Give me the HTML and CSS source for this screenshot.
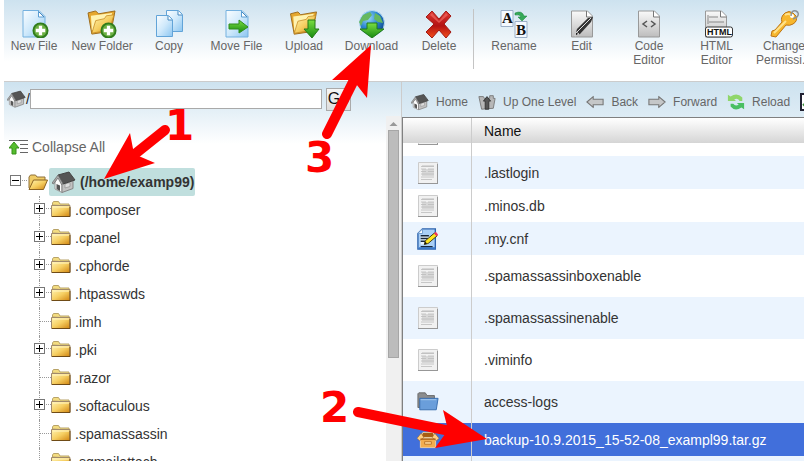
FILE: index.html
```html
<!DOCTYPE html>
<html lang="en">
<head>
<meta charset="utf-8">
<title>File Manager</title>
<link rel="stylesheet" href="styles.css">
</head>
<body>
<svg class="defs" aria-hidden="true">
  <defs>
    <linearGradient id="blueG" x1="0" y1="0" x2="1" y2="1"><stop offset="0" stop-color="#fafdff"/><stop offset=".5" stop-color="#cfe9fb"/><stop offset="1" stop-color="#8cc6f1"/></linearGradient>
    <linearGradient id="grayG" x1="0" y1="0" x2="0" y2="1"><stop offset="0" stop-color="#fafafa"/><stop offset="1" stop-color="#bdbdbd"/></linearGradient>
    <linearGradient id="goldG" x1="0" y1="0" x2="1" y2="1"><stop offset="0" stop-color="#fff3b0"/><stop offset=".5" stop-color="#f6cf62"/><stop offset="1" stop-color="#d08410"/></linearGradient>
    <linearGradient id="greenG" x1="0" y1="0" x2="0" y2="1"><stop offset="0" stop-color="#7ade42"/><stop offset="1" stop-color="#168a10"/></linearGradient>
    <linearGradient id="redG" x1="0" y1="0" x2="0" y2="1"><stop offset="0" stop-color="#e03a34"/><stop offset=".55" stop-color="#b31212"/><stop offset="1" stop-color="#f4511c"/></linearGradient>
    <radialGradient id="globeG" cx=".35" cy=".3" r=".8"><stop offset="0" stop-color="#9bd8f8"/><stop offset=".5" stop-color="#2b86cf"/><stop offset="1" stop-color="#0b3f84"/></radialGradient>

    <symbol id="page-blue" viewBox="0 0 28 28"><path d="M3 .5h16l6 6v20.500H3z" fill="url(#blueG)" stroke="#75b1df"/><path d="M18.500 1v6h6" fill="#fff" stroke="#5c9fd3"/><path d="M19 2l5 5" stroke="#4588bf"/></symbol>
    <symbol id="plus" viewBox="0 0 18 18"><circle cx="9" cy="9" r="7.500" fill="#6cb043" stroke="#317d1c" stroke-width="2"/><path d="M9 4v10M4 9h10" stroke="#fff" stroke-width="3.500"/></symbol>
    <symbol id="folder-open" viewBox="0 0 32 28"><path d="M2 3l8-2 3 3 17-3-4 21-20 3z" fill="#e5a72e" stroke="#9b6a1b"/><path d="M5 6l22-3-3 14-18 4z" fill="#fff3b0"/><path d="M6 24l4-13 9-2 2-3 8-1-5 16z" fill="url(#goldG)" stroke="#c48a23" stroke-width=".8"/></symbol>
    <symbol id="page-gray" viewBox="0 0 28 28"><path d="M3.500 1h16l5 5v21h-21z" fill="url(#grayG)" stroke="#999"/><path d="M18.500 1v6h6" fill="#fff" stroke="#777"/></symbol>
    <symbol id="home" viewBox="0 0 24 22"><path d="M3 11v7l7 3.500V10L6 5z" fill="#fcfcfc" stroke="#999"/><path d="M10 10v11.500l11-4v-8z" fill="#c2c2c2" stroke="#858585"/><path d="M4.500 13l3.500 1.500V20l-3.500-2z" fill="#555"/><path d="M13 13l5-1.500v4L13 17z" fill="#ddd" stroke="#888" stroke-width=".6"/><path d="M6 4l11-3 6 8-12 4z" fill="#555" stroke="#444"/><path d="M0 12l6-8 5 8.500-1.500 1L6 7l-4.500 6z" fill="#aaa" stroke="#666" stroke-width=".7"/></symbol>
    <symbol id="folder" viewBox="0 0 20 17"><path d="M1.500 4V2l1-1.500h5L9 3h9v2z" fill="#f3dc81" stroke="#b8a368"/><path d="M.5 4.500h18.500v11H.5z" fill="url(#goldG)" stroke="#a18a6c"/><path d="M1 15.500h18V6" fill="none" stroke="#6f4b16"/><path d="M2 6h16" stroke="#fff6c4"/></symbol>
    <symbol id="folder-root" viewBox="0 0 20 17"><path d="M1 14V3l1.500-2h5L9 3h8v4" fill="#f0cc66" stroke="#8f713a"/><path d="M1 15.500L5.500 6H19.500l-4 9.500z" fill="url(#goldG)" stroke="#8c6423"/></symbol>
    <symbol id="doc" viewBox="0 0 22 24"><path d="M1.500 1.500h19v21h-19z" fill="#f1f1f1" stroke="#ccc"/><path d="M1 22.500h20M20.500 3v19" stroke="#979797"/><path d="M5 4h12v2H5zm0 4h12v7H5z" fill="#d8d8d8"/><path d="M4 5.500h13M4 8h5m2 0h6M4 10.500h5m2 0h6M4 13h13M4 16h13M4 18.500h11" stroke="#bcbcbc" stroke-width=".8"/></symbol>
    <symbol id="doc-edit" viewBox="0 0 24 24"><path d="M6 1h14v22H1V6z" fill="#a9cff6" stroke="#2c62ad" stroke-width="1.500"/><path d="M6 1v5H1z" fill="#fff" stroke="#6d9bd0"/><path d="M4 8h9l-1 10H4z" fill="#e9f4ff"/><path d="M4 8.500h9M4 11.500h8M4 14.500h6M4 20.500h13" stroke="#17263b" stroke-width="1.500"/><path d="M2 22h18" stroke="#3977c7" stroke-width="2"/><path d="M8 18l1-4 10-8.500 3 3L12 17z" fill="#ffe51c" stroke="#342f0c"/><path d="M8 18l1-3 2 2z" fill="#111"/><path d="M18.500 6l2-2 2.500 3-1.500 2z" fill="#f0385b"/></symbol>
    <symbol id="folder-blue" viewBox="0 0 24 22"><path d="M1 17V2l1-1h7l2 3h8v12z" fill="#8b8d8f" stroke="#666"/><path d="M3 7h20l-2 12.500H3z" fill="#6a9edb" stroke="#356aac"/><path d="M4 8.500h17" stroke="#a9caec"/></symbol>
    <symbol id="box" viewBox="0 0 26 22"><path d="M7 2h12l2 6H4z" fill="#a65d12" stroke="#fce0ae"/><path d="M4 9h18v11H4z" fill="#f2ad4d" stroke="#fbd9a0"/><path d="M5 3L0 9l3 3 5-4zm16 0l5 6-3 3-5-4z" fill="#ffcf82" stroke="#9b6426" stroke-width=".7"/><path d="M4 10h18" stroke="#a35a14" stroke-width="1.500"/><path d="M9 13h8v3H9z" fill="#ffd895" stroke="#b46e22"/></symbol>
    <symbol id="arrow-left" viewBox="0 0 20 14"><path d="M1 7l7-6v3h11v6H8v3z" fill="#c5c7c8" stroke="#777" stroke-width="1.200"/></symbol>
  </defs>
</svg>

<div class="app">
  <header class="toolbar">
    <div class="group group-main">
      <button type="button"><svg class="ico" viewBox="0 0 32 28"><use href="#page-blue" x="2" width="28" height="28"/><use href="#plus" x="14" y="12" width="17" height="17"/></svg>New File</button>
      <button type="button"><svg class="ico" viewBox="0 0 32 28"><use href="#folder-open" width="31" height="27"/><use href="#plus" x="14" y="12" width="17" height="17"/></svg>New Folder</button>
      <button type="button"><svg class="ico" viewBox="0 0 32 28"><path d="M13.500.5h12l4 4v17h-16z" fill="url(#blueG)" stroke="#62a4d8"/><path d="M25 1v4h4" fill="#fff" stroke="#4588bf"/><path d="M3.500 5.500h12l4 4v17h-16z" fill="url(#blueG)" stroke="#62a4d8"/><path d="M15 6v4h4" fill="#fff" stroke="#4588bf"/></svg>Copy</button>
      <button type="button"><svg class="ico" viewBox="0 0 32 28"><use href="#page-blue" x="2" width="28" height="28"/><path d="M8 14h10v-4l9 7-9 6v-4H8z" fill="url(#greenG)" stroke="#2f8c1c"/></svg>Move File</button>
      <button type="button"><svg class="ico" viewBox="0 0 32 28"><use href="#folder-open" y="1" width="31" height="26"/><path d="M20 10h7v9h4l-7 9-8-9h4z" fill="url(#greenG)" stroke="#277a19"/></svg>Upload</button>
      <button type="button"><svg class="ico" viewBox="0 0 32 28"><circle cx="16" cy="13" r="12.500" fill="url(#globeG)" stroke="#bbdef5"/><path d="M7 5l7-3 2 3-4 5-5 1-2 5-2-4zM19 3l5 3 3 7-5-1-4-3z" fill="#66b85f"/><path d="M11 13h10v6h7l-12 9-12-9h7z" fill="url(#greenG)" stroke="#217a18"/></svg>Download</button>
      <button type="button"><svg class="ico" viewBox="0 0 32 28"><path d="M9 1l7 8 7-8 5 5-7 8 7 8-5 6-7-8-7 8-6-6 8-8-8-7z" fill="url(#redG)" stroke="#a31a14"/><path d="M9 3l7 8 7-8 2 2-9 8-9-8z" fill="#ef6b64" opacity=".65"/></svg>Delete</button>
    </div>
    <div class="separator"></div>
    <div class="group group-edit">
      <button type="button"><svg class="ico letter" viewBox="0 0 32 28"><path d="M3 .5h12v16H3zM17 11.500h12v16H17z" fill="#f4f9ff" stroke="#9bafc8"/><text x="4" y="13">A</text><text x="18" y="25">B</text><path d="M17 3q7-3 9 3h3l-5 5-4-4h3q-1-3-6-2z" fill="#35a958" stroke="#1a803b" stroke-width=".5"/></svg>Rename</button>
      <button type="button"><svg class="ico" viewBox="0 0 32 28"><use href="#page-gray" x="2" width="28" height="28"/><path d="M9 26l2-7L22 8l5-1-2 5-11 12z" fill="#333"/><path d="M11 22L25 8M9 26l1-4 3 2z" stroke="#ddd"/></svg>Edit</button>
      <button type="button"><svg class="ico" viewBox="0 0 32 28"><use href="#page-gray" x="2" width="28" height="28"/><path d="M14 11l-4 3 4 3m4-6l4 3-4 3" fill="none" stroke="#555" stroke-width="1.500"/></svg>Code<br>Editor</button>
      <button type="button"><svg class="ico html" viewBox="0 0 32 28"><use href="#page-gray" x="1" width="28" height="28"/><path d="M8 7h9M8 12h15M7 5v9" stroke="#888"/><rect x="4.500" y="17" width="27" height="10" rx="2" fill="#fff" stroke="#333"/><text x="6" y="25">HTML</text></svg>HTML<br>Editor</button>
      <button type="button"><svg class="ico" viewBox="0 0 32 28"><path d="M17 3q4-3 8 0l3 3q2 5-3 8-3 2-7 1L8 27l-5-1 1-5 3-1 7-8q-2-5 3-9z" fill="#f7b72d" stroke="#bd7414"/><path d="M17 5q3-2 6 0M6 23L18 11" stroke="#ffe28b" stroke-width="2" fill="none"/><circle cx="24" cy="6" r="2" fill="#fff"/><path d="M23 6q0-6 5-5 4 2 1 6l-4 2" fill="none" stroke="#8b9298" stroke-width="1.500"/></svg>Change<br>Permissi...</button>
    </div>
  </header>

  <div class="split">
    <aside class="sidebar">
      <form class="address">
        <label for="path"><svg class="home-s" viewBox="0 0 24 22"><use href="#home"/></svg>/</label>
        <input id="path" type="text">
        <button type="button">Go</button>
      </form>
      <div class="tree-area">
        <nav class="tree">
          <button type="button" class="collapse"><svg class="collapse-ico" viewBox="0 0 20 16"><path d="M0 1.500h19M11 5.500h8M11 9.500h8M11 13.500h8" stroke="#666" stroke-width="1.200"/><path d="M5 3l5 6H7v6H3V9H0z" fill="#55bd2d" stroke="#368f1b"/></svg>Collapse All</button>
          <div class="root"><button type="button" class="toggle minus" aria-label="Collapse"></button><svg class="folder" viewBox="0 0 20 17"><use href="#folder-root"/></svg><a href="#"><svg class="home-m" viewBox="0 0 24 22"><use href="#home"/></svg>(/home/examp99)</a></div>
          <ul>
            <li><button type="button" class="toggle" aria-label="Expand"></button><svg class="folder" viewBox="0 0 20 17"><use href="#folder"/></svg><a href="#">.composer</a></li>
            <li><button type="button" class="toggle" aria-label="Expand"></button><svg class="folder" viewBox="0 0 20 17"><use href="#folder"/></svg><a href="#">.cpanel</a></li>
            <li><button type="button" class="toggle" aria-label="Expand"></button><svg class="folder" viewBox="0 0 20 17"><use href="#folder"/></svg><a href="#">.cphorde</a></li>
            <li><button type="button" class="toggle" aria-label="Expand"></button><svg class="folder" viewBox="0 0 20 17"><use href="#folder"/></svg><a href="#">.htpasswds</a></li>
            <li class="leaf"><svg class="folder" viewBox="0 0 20 17"><use href="#folder"/></svg><a href="#">.imh</a></li>
            <li><button type="button" class="toggle" aria-label="Expand"></button><svg class="folder" viewBox="0 0 20 17"><use href="#folder"/></svg><a href="#">.pki</a></li>
            <li class="leaf"><svg class="folder" viewBox="0 0 20 17"><use href="#folder"/></svg><a href="#">.razor</a></li>
            <li><button type="button" class="toggle" aria-label="Expand"></button><svg class="folder" viewBox="0 0 20 17"><use href="#folder"/></svg><a href="#">.softaculous</a></li>
            <li class="leaf"><svg class="folder" viewBox="0 0 20 17"><use href="#folder"/></svg><a href="#">.spamassassin</a></li>
            <li class="leaf"><svg class="folder" viewBox="0 0 20 17"><use href="#folder"/></svg><a href="#">.sqmailattach</a></li>
          </ul>
        </nav>
        <div class="scrollbar"><svg viewBox="0 0 15 14"><path d="M3.500 10h8L7.500 6z" fill="#999"/></svg><div class="thumb"></div></div>
      </div>
    </aside>

    <main class="files">
      <div class="nav">
        <button type="button"><svg viewBox="0 0 24 22"><use href="#home"/></svg>Home</button>
        <button type="button"><svg viewBox="0 0 20 18"><path d="M1 3h5l1 2h6V2h4v3h2l-2 11-13 1z" fill="#b7b7b7" stroke="#777"/><path d="M10 3l4 5h-2v9H8V8H6z" fill="#555" stroke="#333"/></svg>Up One Level</button>
        <button type="button"><svg viewBox="0 0 20 14"><use href="#arrow-left"/></svg>Back</button>
        <button type="button"><svg class="flip" viewBox="0 0 20 14"><use href="#arrow-left"/></svg>Forward</button>
        <button type="button"><svg viewBox="0 0 20 18"><path d="M1 1l3 2q7-5 13 1v4h-3q-2-4-6-2l2 2H1z" fill="#8fd66b"/><path d="M19 17l-3-2q-7 5-12-1v-3h3q2 3 6 1l-2-2h8z" fill="#49bf62"/></svg>Reload</button>
        <button type="button" aria-label="Select All"><svg viewBox="0 0 18 18"><path d="M1 1h16v16H1z" fill="#fff" stroke="#223" stroke-width="2"/><path d="M3 11l4 4 8-10" stroke="#3a8e3b" stroke-width="2" fill="none"/></svg></button>
      </div>
      <table>
        <thead><tr><th class="icon-col"></th><th>Name</th></tr></thead>
        <tbody>
          <tr class="peek"><td><div><svg class="file" viewBox="0 0 22 24"><use href="#doc"/></svg></div></td><td></td></tr>
          <tr class="alt"><td><svg class="file" viewBox="0 0 22 24"><use href="#doc"/></svg></td><td>.lastlogin</td></tr>
          <tr><td><svg class="file" viewBox="0 0 22 24"><use href="#doc"/></svg></td><td>.minos.db</td></tr>
          <tr class="alt"><td><svg class="file" viewBox="0 0 24 24"><use href="#doc-edit"/></svg></td><td>.my.cnf</td></tr>
          <tr class="tall"><td><svg class="file" viewBox="0 0 22 24"><use href="#doc"/></svg></td><td>.spamassassinboxenable</td></tr>
          <tr class="tall alt"><td><svg class="file" viewBox="0 0 22 24"><use href="#doc"/></svg></td><td>.spamassassinenable</td></tr>
          <tr class="tall"><td><svg class="file" viewBox="0 0 22 24"><use href="#doc"/></svg></td><td>.viminfo</td></tr>
          <tr class="tall alt"><td><svg class="file" viewBox="0 0 24 22"><use href="#folder-blue"/></svg></td><td>access-logs</td></tr>
          <tr class="selected"><td><svg class="file" viewBox="0 0 26 22"><use href="#box"/></svg></td><td>backup-10.9.2015_15-52-08_exampl99.tar.gz</td></tr>
          <tr class="alt"><td></td><td></td></tr>
        </tbody>
      </table>
    </main>
  </div>
</div>

<svg class="notes" width="804" height="461" viewBox="0 0 804 461">
  <path class="shaft" d="M165 130L130 158M327 134L354 80M358 412L450 431"/>
  <path d="M104 179L130 133L134 154L155 163zM371 45L332 80L353 80L367 98zM487 439L443 410L448 430L435 448z"/>
  <text x="165" y="140">1</text><text x="320" y="422">2</text><text x="305" y="172">3</text>
</svg>
</body>
</html>
```
FILE: styles.css
```css
* { box-sizing: border-box; }

body {
  margin: 0;
  overflow: hidden;
  background: #fff;
  color: #333;
  font: 14px/16px "Liberation Sans", Arial, sans-serif;
}

button { padding: 0; border: 0; background: none; color: #666; font: inherit; }
a { color: inherit; text-decoration: none; }
svg { display: block; flex: none; }
.defs { position: absolute; width: 0; height: 0; }

.app { display: flex; flex-direction: column; height: 100vh; padding-left: 4px; }

/* main toolbar */
.toolbar {
  display: flex;
  flex: none;
  height: 82px;
  padding-top: 9px;
  border-bottom: 1px solid #ccc;
  background: linear-gradient(#cde2ef, #fff 62px);
}
.group { display: flex; flex: none; justify-content: space-between; align-items: flex-start; }
.group-main { width: 465px; }
.group-edit { width: 330px; }
.group button { width: 60px; font-size: 12px; line-height: 14px; white-space: nowrap; }
.ico { width: 32px; height: 28px; margin: 1px auto; }
.separator { flex: none; width: 1px; height: 60px; margin: 0 10px 0 4px; background: #c4c4c4; }
.letter text { font: bold 15px "Liberation Serif", serif; fill: #111; }
.html text { font: bold 9px "Liberation Sans", sans-serif; fill: #111; }

.split { display: flex; flex: 1; min-height: 0; }

/* folder tree */
.sidebar {
  display: flex;
  flex: none;
  flex-direction: column;
  width: 398px;
  border-right: 1px solid #ccc;
  background: linear-gradient(#cde2ef, #fff 62px);
}
.address { display: flex; flex: none; align-items: center; height: 34px; padding-left: 3px; }
.address label { display: flex; align-items: center; color: #222; }
.home-s { width: 19px; height: 18px; }
.address input { width: 292px; height: 20px; padding: 0 2px; border: 1px solid #a9a9a9; background: #fff; }
.address button {
  width: 25px;
  height: 23px;
  margin-left: 4px;
  border: 1px solid #aaa;
  background: linear-gradient(#f6f6f6, #ddd);
  color: #111;
  font-size: 16px;
  white-space: nowrap;
}
.tree-area { display: flex; flex: 1; min-height: 0; overflow: hidden; }
.tree { flex: 1; padding: 17px 0 0 5px; }
.collapse { display: flex; align-items: center; gap: 3px; height: 28px; }
.collapse-ico { width: 20px; height: 16px; }
.root { display: flex; align-items: center; height: 28px; margin-top: 7px; padding-left: 1px; }
.root a {
  display: flex;
  align-items: center;
  gap: 4px;
  height: 28px;
  margin-left: 1px;
  padding: 0 1px 0 3px;
  border-radius: 2px;
  background: #c0dfde;
  font-weight: bold;
}
.home-m { width: 24px; height: 22px; }
.folder { width: 20px; height: 17px; }
.tree ul { margin: 0; padding: 0 0 0 25px; list-style: none; }
.tree li { position: relative; display: flex; align-items: center; height: 28px; }
.tree li::before {
  content: "";
  position: absolute;
  top: 0;
  bottom: 0;
  left: 5px;
  border-left: 1px dotted #999;
}
.tree li a { margin-left: 4px; }
.tree li .folder { margin-bottom: 2px; }
.leaf::after { content: ""; order: -1; width: 11px; margin: 0 0 2px 6px; border-top: 1px dotted #999; }
.toggle {
  position: relative;
  z-index: 1;
  flex: none;
  width: 11px;
  height: 11px;
  margin: 0 6px 4px 0;
  border: 1px solid #777;
  background:
    linear-gradient(#000, #000) center / 7px 1px no-repeat,
    linear-gradient(#000, #000) center / 1px 7px no-repeat,
    #fff;
}
.toggle.minus { margin-right: 7px; background: linear-gradient(#000, #000) center / 7px 1px no-repeat, #fff; }
.toggle::after { content: ""; position: absolute; top: 4px; left: 11px; width: 5px; border-top: 1px dotted #999; }

.scrollbar { flex: none; width: 15px; background: #f0f0f0; }
.thumb { width: 11px; height: 228px; margin-left: 2px; border: 1px solid #a6a6a6; background: #bcbcbc; }

/* file list */
.files { flex: 1; min-width: 0; overflow: hidden; }
.nav {
  display: flex;
  align-items: center;
  gap: 10px;
  height: 35px;
  padding: 5px 0 0 9px;
  background: linear-gradient(#cde2ef, #deecf5);
}
.nav button { display: flex; flex: none; align-items: center; gap: 7px; font-size: 12px; }
.nav svg { width: 18px; height: 18px; }
.flip { transform: scaleX(-1); }

table { width: 100%; border-collapse: separate; border-spacing: 0; border: solid #808080; border-width: 1px 0 0 1px; }
th { height: 25px; padding: 0 12px; background: linear-gradient(#fff, #d5d5d5); color: #111; font-weight: normal; text-align: left; }
td { height: 33px; padding: 0 12px; white-space: nowrap; }
.icon-col { width: 69px; }
th:first-child, td:first-child { padding: 0 14px; border-right: 1px solid #ccc; }
.file { width: 22px; height: 24px; }
.peek td { height: 13px; }
.peek div { display: flex; align-items: flex-end; height: 13px; padding-bottom: 10px; overflow: hidden; }
.tall td { height: 42px; }
.alt { background: #ebf4fe; }
.selected { background: #416fdb; color: #fff; }

/* numbered callouts drawn over the panels */
.notes { position: absolute; top: 0; left: 0; fill: #f00; pointer-events: none; }
.notes .shaft { fill: none; stroke: #f00; stroke-width: 10px; stroke-linecap: round; }
.notes text { font: bold 42px "DejaVu Sans", sans-serif; }
```
